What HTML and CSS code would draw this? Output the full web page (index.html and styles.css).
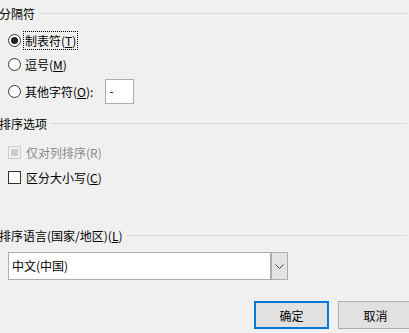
FILE: index.html
```html
<!DOCTYPE html>
<html lang="zh-CN">
<head>
<meta charset="utf-8">
<title>排序选项</title>
<link rel="stylesheet" href="styles.css">
</head>
<body>
<div class="dialog">
  <div class="group-title t1"><span>分隔符</span><i class="rule"></i></div>

  <div class="row r1">
    <span class="radio checked"></span>
    <span class="label focus">制表符(<u>T</u>)</span>
  </div>
  <div class="row r2">
    <span class="radio"></span>
    <span class="label">逗号(<u>M</u>)</span>
  </div>
  <div class="row r3">
    <span class="radio"></span>
    <span class="label">其他字符(<u>O</u>):</span>
    <span class="textbox">-</span>
  </div>

  <div class="group-title t2"><span>排序选项</span><i class="rule"></i></div>

  <div class="row c1">
    <span class="check disabled"></span>
    <span class="label muted">仅对列排序(R)</span>
  </div>
  <div class="row c2">
    <span class="check"></span>
    <span class="label">区分大小写(<u>C</u>)</span>
  </div>

  <div class="group-title t3"><span>排序语言(国家/地区)(<u>L</u>)</span><i class="rule"></i></div>

  <div class="combo">
    <span class="combo-text">中文(中国)</span>
    <span class="combo-btn">
      <svg width="9" height="5" viewBox="0 0 9 5"><polyline points="0.5,0.5 4.5,4.5 8.5,0.5" fill="none" stroke="#444" stroke-width="1"/></svg>
    </span>
  </div>

  <div class="buttons">
    <span class="btn default">确定</span>
    <span class="btn">取消</span>
  </div>
</div>
</body>
</html>
```

FILE: styles.css
```css
html, body {
  margin: 0;
  padding: 0;
  overflow: hidden;
  background: #f0f0f0;
}
body {
  width: 409px;
  height: 333px;
  font-family: "Noto Sans CJK SC", "Microsoft YaHei", sans-serif;
  font-size: 12px;
  color: #000;
}
u { text-decoration: underline; text-underline-offset: 1px; }

.dialog {
  display: flex;
  flex-direction: column;
}

.group-title {
  display: flex;
  align-items: center;
  height: 20px;
  margin-left: -1px;
  margin-right: 2px;
  white-space: nowrap;
}
.group-title .rule {
  flex: 1;
  border-top: 1px solid #d9d9d9;
  margin-left: 4px;
  margin-top: 1px;
}
.t1 { margin-top: 3px; }
.t2 { margin-top: 9px; }
.t3 { margin-top: 38px; }

.row {
  display: flex;
  align-items: center;
  height: 20px;
  padding-left: 8px;
}
.r1 { margin-top: 7px; }
.r2 { margin-top: 4px; }
.r3 { margin-top: 5px; height: 25px; }
.c1 { margin-top: 9px; }
.c2 { margin-top: 5px; }

.label {
  margin-left: 2px;
  padding: 0 2px;
  border: 1px solid transparent;
  line-height: 17px;
  white-space: nowrap;
}
.radio + .label { margin-left: 2px; padding: 0 1px; }
.radio + .label.focus { border: 1px dotted #000; }
.label.muted { color: #8a8a8a; }

.radio {
  box-sizing: border-box;
  width: 13px;
  height: 13px;
  border: 1px solid #333;
  border-radius: 50%;
  background: #fff;
  display: flex;
  align-items: center;
  justify-content: center;
  flex: none;
}
.radio.checked::after {
  content: "";
  width: 7px;
  height: 7px;
  border-radius: 50%;
  background: #222;
}

.check {
  box-sizing: border-box;
  width: 13px;
  height: 13px;
  border: 1px solid #333;
  background: #fff;
  flex: none;
  display: flex;
  align-items: center;
  justify-content: center;
}
.check.disabled {
  border-color: #cccccc;
  background: #f0f0f0;
}
.check.disabled::after {
  content: "";
  width: 7px;
  height: 7px;
  background: #cccccc;
}

.textbox {
  box-sizing: border-box;
  width: 29px;
  height: 25px;
  margin-left: 10px;
  border: 1px solid #adadad;
  background: #fff;
  padding-left: 3px;
  line-height: 21px;
}

.combo {
  box-sizing: border-box;
  margin-top: 7px;
  margin-left: 8px;
  width: 280px;
  height: 28px;
  border: 1px solid #adadad;
  background: #fff;
  display: flex;
  align-items: stretch;
}
.combo-text {
  flex: 1;
  padding-left: 3px;
  line-height: 26px;
}
.combo-btn {
  box-sizing: border-box;
  width: 17px;
  background: #e3e3e3;
  border: 1px solid #adadad;
  border-width: 0 0 0 2px;
  display: flex;
  align-items: center;
  justify-content: center;
}

.buttons {
  display: flex;
  justify-content: flex-end;
  gap: 9px;
  margin-top: 21px;
  margin-right: -4px;
}
.btn {
  box-sizing: border-box;
  width: 75px;
  height: 28px;
  border: 1px solid #adadad;
  background: #e1e1e1;
  display: flex;
  align-items: center;
  justify-content: center;
  flex: none;
}
.btn.default {
  border: 2px solid #0078d7;
}
```
